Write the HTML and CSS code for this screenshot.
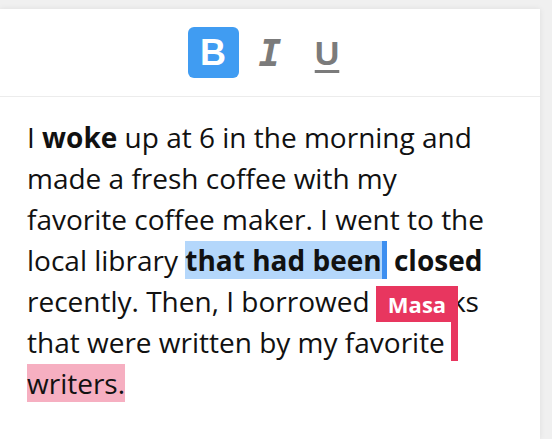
FILE: index.html
```html
<!DOCTYPE html>
<html lang="en">
<head>
    <meta charset="UTF-8">
    <meta name="viewport" content="width=device-width, initial-scale=1.0">
    <title>Shared Editor</title>
    <link rel="stylesheet" href="styles.css">
</head>
<body>
    <div class="editor">
        <div class="toolbar">
            <button class="tool active bold">B</button>
            <button class="tool italic">I</button>
            <button class="tool underline">U</button>
        </div>
        <div class="content">
            I <b>woke</b> up at 6 in the morning and made a fresh coffee with my favorite coffee maker. I went to the local library <span class="selection"><b>that had been</b></span> <b>closed</b> recently. Then, I borrowed 3 books that were written by my favorite <span class="remote-caret"><span class="remote-label">Masa</span></span> <span class="remote-selection">writers.</span>
        </div>
    </div>
</body>
</html>
```

FILE: styles.css
```css
body {
    margin: 0;
    padding: 9px 0 0;
    background-color: #f0f0f0;
    font-family: "Open Sans", sans-serif;
}
.editor {
    width: 540px;
    min-height: 430px;
    background-color: #fff;
    box-shadow: 0 0 6px rgba(0, 0, 0, 0.08);
}
.toolbar {
    display: flex;
    justify-content: center;
    gap: 6px;
    padding: 18px;
    border-bottom: 1px solid #ececec;
}
.tool {
    width: 51px;
    height: 51px;
    padding: 0;
    border: none;
    border-radius: 6px;
    background: none;
    color: #7b7b7b;
    cursor: pointer;
    line-height: 1;
}
.tool.active {
    background-color: #409cf2;
    color: #fff;
}
.bold {
    font-weight: bold;
    font-size: 36px;
}
.italic {
    font-family: "DejaVu Sans Mono", monospace;
    font-style: italic;
    font-weight: bold;
    font-size: 38px;
}
.underline {
    font-weight: bold;
    font-size: 34px;
    text-decoration: underline;
    text-decoration-thickness: 3px;
    text-underline-offset: 5px;
}
.content {
    width: 470px;
    padding: 20px 27px 30px;
    font-size: 28px;
    line-height: 41px;
    color: #111;
}
.selection {
    background-color: #b4d7fb;
    border-right: 5px solid #3d8ff0;
}
.remote-selection {
    background-color: #f6afc1;
}
.remote-caret {
    position: relative;
    display: inline-block;
    width: 7px;
    height: 39px;
    margin-left: -1px;
    vertical-align: top;
    background-color: #e8365f;
}
.remote-label {
    position: absolute;
    right: 0;
    bottom: 100%;
    padding: 0 12px;
    height: 36px;
    line-height: 36px;
    font-size: 22px;
    font-weight: bold;
    color: #fff;
    background-color: #e8365f;
    white-space: nowrap;
}
```
